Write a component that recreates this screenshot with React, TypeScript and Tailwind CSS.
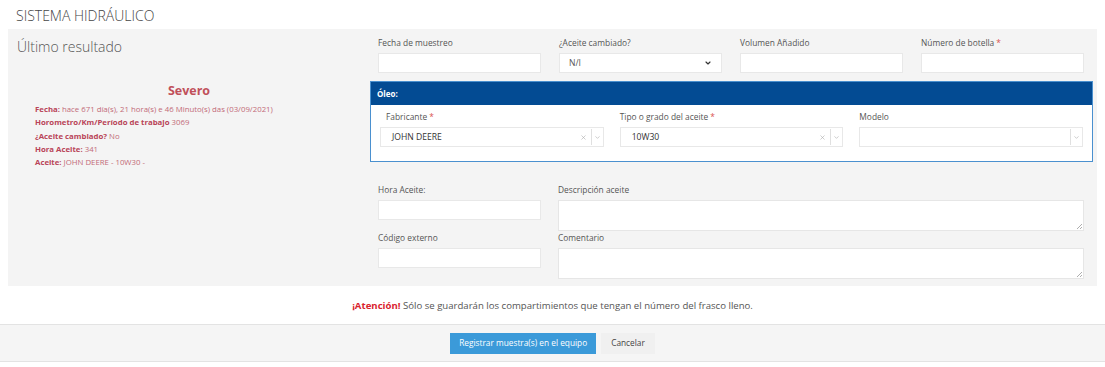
import { ChevronDown, X } from 'lucide-react'

const font = { fontFamily: '"Open Sans", "Liberation Sans", sans-serif' }

function Label({ text, required }: { text: string; required?: boolean }) {
  return (
    <div className="mb-[3px] h-[14px] text-[8.4px] leading-[14px] text-[#555]">
      {text}
      {required && <span className="ml-[2px] text-[#d9534f]">*</span>}
    </div>
  )
}

function Input() {
  return <div className="h-[20px] border border-[#e8e8e8] bg-white" />
}

function Textarea() {
  return (
    <div className="relative h-[31px] border border-[#e6e6e6] bg-white">
      <svg
        className="absolute right-[1px] bottom-[1px]"
        width="6"
        height="6"
        viewBox="0 0 6 6"
      >
        <path d="M6 1 L1 6 M6 4 L4 6" stroke="#999" strokeWidth="0.8" />
      </svg>
    </div>
  )
}

function ReactSelect({ value }: { value?: string }) {
  return (
    <div className="flex h-[20px] items-center border border-[#e8e8e8] bg-white">
      <div className="flex-1 pl-[11px] text-[8.6px] text-[#333]">{value}</div>
      {value && <X className="h-[7px] w-[7px] text-[#aaa]" strokeWidth={2} />}
      <div className="ml-[4px] h-[16px] w-px bg-[#e0e0e0]" />
      <div className="flex w-[11px] justify-center">
        <ChevronDown className="h-[7px] w-[7px] text-[#aaa]" strokeWidth={2} />
      </div>
    </div>
  )
}

export default function App() {
  return (
    <div className="h-[367px] w-[1105px] bg-white" style={font}>
      <div className="pt-[6px] pl-[16px] text-[14px] leading-[19px] font-light text-[#444]">
        SISTEMA HIDRÁULICO
      </div>

      <div className="mx-[8px] mt-[4px] flex h-[257px] bg-[#f4f4f4]">
        {/* left column */}
        <div className="w-[362px]">
          <div className="pt-[8px] pl-[9px] text-[14px] leading-[20px] font-light text-[#555]">
            Último resultado
          </div>
          <div className="mt-[26px] text-center text-[12.5px] leading-[16px] font-bold text-[#c0505a]">
            Severo
          </div>
          <div className="mt-[4px] pl-[27px] text-[7.8px] leading-[13.3px] text-[#c26a78]">
            <div>
              <b className="text-[#b94458]">Fecha:</b> hace 671 día(s), 21 hora(s) e 46 Minuto(s) das (03/09/2021)
            </div>
            <div>
              <b className="text-[#b94458]">Horometro/Km/Período de trabajo</b> 3069
            </div>
            <div>
              <b className="text-[#b94458]">¿Aceite cambiado?</b> No
            </div>
            <div>
              <b className="text-[#b94458]">Hora Aceite:</b> 341
            </div>
            <div>
              <b className="text-[#b94458]">Aceite:</b> JOHN DEERE - 10W30 -
            </div>
          </div>
        </div>

        {/* right form */}
        <div className="flex-1 pt-[7px] pr-[13px]">
          <div className="grid grid-cols-4 gap-x-[18px] pl-[8px]">
            <div>
              <Label text="Fecha de muestreo" />
              <Input />
            </div>
            <div>
              <Label text="¿Aceite cambiado?" />
              <div className="flex h-[20px] items-center justify-between border border-[#e8e8e8] bg-white px-[9px] text-[8.6px] text-[#555]">
                <span>N/I</span>
                <ChevronDown className="h-[8px] w-[8px] text-[#333]" strokeWidth={3.5} />
              </div>
            </div>
            <div>
              <Label text="Volumen Añadido" />
              <Input />
            </div>
            <div>
              <Label text="Número de botella" required />
              <Input />
            </div>
          </div>

          <div className="mt-[8px] mr-[-9px] border border-[#4a90cf] bg-white">
            <div className="flex h-[23px] items-center bg-[#034b93] pl-[6px] text-[8px] font-bold text-white">
              Óleo:
            </div>
            <div className="grid grid-cols-3 gap-x-[16px] px-[9px] pt-[5px] pb-[14px]">
              <div>
                <div className="pl-[6px]">
                  <Label text="Fabricante" required />
                </div>
                <ReactSelect value="JOHN DEERE" />
              </div>
              <div>
                <Label text="Tipo o grado del aceite" required />
                <ReactSelect value="10W30" />
              </div>
              <div>
                <Label text="Modelo" />
                <ReactSelect />
              </div>
            </div>
          </div>

          <div className="mt-[21px] grid grid-cols-[163px_1fr] gap-x-[17px] pl-[8px]">
            <div>
              <Label text="Hora Aceite:" />
              <Input />
            </div>
            <div>
              <Label text="Descripción aceite" />
              <Textarea />
            </div>
            <div>
              <Label text="Código externo" />
              <Input />
            </div>
            <div>
              <Label text="Comentario" />
              <Textarea />
            </div>
          </div>
        </div>
      </div>

      <div className="mt-[13px] text-center text-[9.6px] leading-[14px] text-[#555]">
        <b className="text-[#d9232e]">¡Atención!</b> Sólo se guardarán los compartimientos que tengan el número del frasco lleno.
      </div>

      <div className="mt-[11px] flex h-[38px] items-center justify-center gap-[5px] border-t border-b border-[#e3e3e3] bg-[#f5f5f5]">
        <button
          type="button"
          className="h-[21px] bg-[#3b9ad9] px-[9px] text-[8.3px] text-white"
        >
          Registrar muestra(s) en el equipo
        </button>
        <button
          type="button"
          className="h-[21px] bg-[#f0f0f0] px-[10px] text-[8.3px] text-[#444]"
        >
          Cancelar
        </button>
      </div>
    </div>
  )
}
